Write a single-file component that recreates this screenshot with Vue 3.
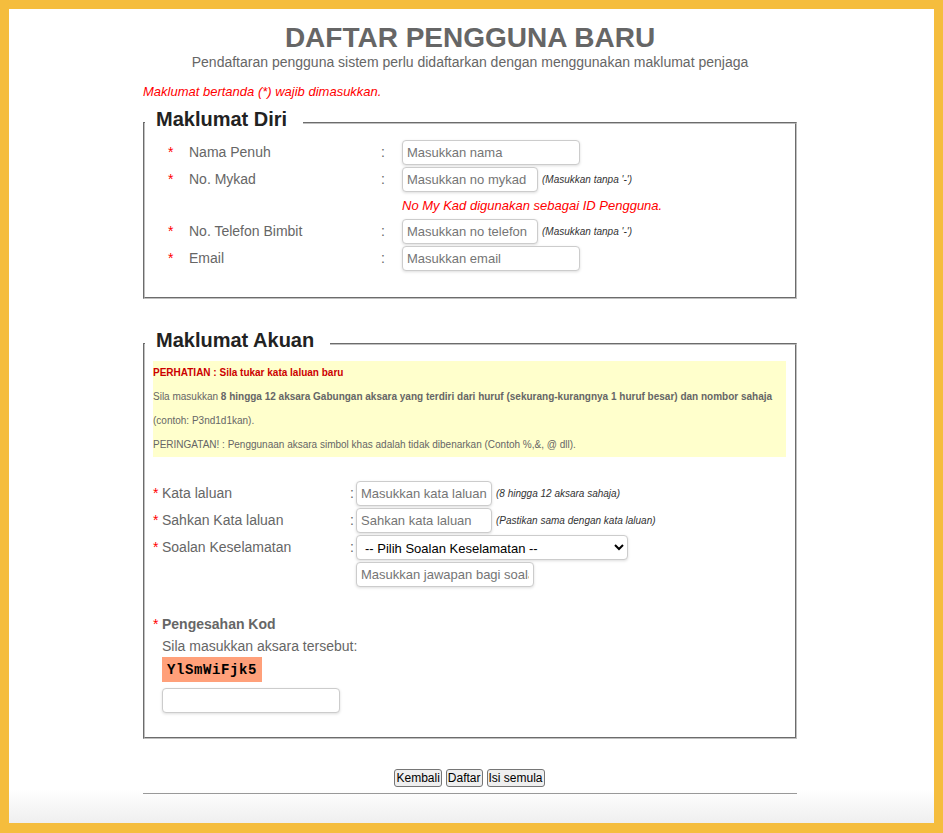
<template>
  <div class="page">
    <div class="content">
      <h1 class="title">DAFTAR PENGGUNA BARU</h1>
      <p class="subtitle">Pendaftaran pengguna sistem perlu didaftarkan dengan menggunakan maklumat penjaga</p>
      <p class="required-note">Maklumat bertanda (*) wajib dimasukkan.</p>

      <fieldset class="box box--diri">
        <legend class="box__legend">Maklumat Diri</legend>
        <div class="rows">
          <div class="row">
            <span class="star">*</span>
            <label class="label">Nama Penuh</label>
            <span class="colon">:</span>
            <input class="input input--long" placeholder="Masukkan nama" />
          </div>
          <div class="row">
            <span class="star">*</span>
            <label class="label">No. Mykad</label>
            <span class="colon">:</span>
            <input class="input input--short" placeholder="Masukkan no mykad" />
            <small class="hint">(Masukkan tanpa '-')</small>
          </div>
          <div class="row row--note">No My Kad digunakan sebagai ID Pengguna.</div>
          <div class="row">
            <span class="star">*</span>
            <label class="label">No. Telefon Bimbit</label>
            <span class="colon">:</span>
            <input class="input input--short" placeholder="Masukkan no telefon" />
            <small class="hint">(Masukkan tanpa '-')</small>
          </div>
          <div class="row">
            <span class="star">*</span>
            <label class="label">Email</label>
            <span class="colon">:</span>
            <input class="input input--long" placeholder="Masukkan email" />
          </div>
        </div>
      </fieldset>

      <fieldset class="box box--akaun">
        <legend class="box__legend">Maklumat Akuan</legend>
        <div class="notice">
          <p class="notice__head">PERHATIAN : Sila tukar kata laluan baru</p>
          <p>Sila masukkan <b>8 hingga 12 aksara Gabungan aksara yang terdiri dari huruf (sekurang-kurangnya 1 huruf besar) dan nombor sahaja</b></p>
          <p>(contoh: P3nd1d1kan).</p>
          <p>PERINGATAN! : Penggunaan aksara simbol khas adalah tidak dibenarkan (Contoh %,&amp;, @ dll).</p>
        </div>

        <div class="rows rows--akaun">
          <div class="row">
            <span class="star">*</span>
            <label class="label">Kata laluan</label>
            <span class="colon">:</span>
            <input class="input input--short" placeholder="Masukkan kata laluan" />
            <small class="hint">(8 hingga 12 aksara sahaja)</small>
          </div>
          <div class="row">
            <span class="star">*</span>
            <label class="label">Sahkan Kata laluan</label>
            <span class="colon">:</span>
            <input class="input input--short" placeholder="Sahkan kata laluan" />
            <small class="hint">(Pastikan sama dengan kata laluan)</small>
          </div>
          <div class="row">
            <span class="star">*</span>
            <label class="label">Soalan Keselamatan</label>
            <span class="colon">:</span>
            <select class="input input--select">
              <option>-- Pilih Soalan Keselamatan --</option>
            </select>
          </div>
          <div class="row">
            <span class="star"></span>
            <span class="label"></span>
            <span class="colon"></span>
            <input class="input input--long" placeholder="Masukkan jawapan bagi soalan keselamatan" />
          </div>
        </div>

        <div class="captcha">
          <div class="captcha__title"><span class="star">*</span><b>Pengesahan Kod</b></div>
          <div class="captcha__body">
            <div class="captcha__prompt">Sila masukkan aksara tersebut:</div>
            <div class="captcha__code">YlSmWiFjk5</div>
            <input class="input input--long" />
          </div>
        </div>
      </fieldset>

      <div class="actions">
        <button type="button">Kembali</button>
        <button type="button">Daftar</button>
        <button type="button">Isi semula</button>
      </div>
      <hr class="rule" />
    </div>
  </div>
</template>

<script setup>
</script>

<style>
html, body { margin: 0; }
</style>

<style scoped>
.page {
  box-sizing: border-box;
  height: 833px;
  overflow: hidden;
  border: 9px solid #f5bd3d;
  border-bottom-width: 10px;
  padding-top: 12px;
  background: linear-gradient(to bottom, #fff 0, #fff 780px, #efefef 814px);
  font-family: "Liberation Sans", Arial, sans-serif;
  font-size: 14px;
  color: #666;
}

.content { width: 654px; margin-left: 134px; }

.title {
  margin: 0;
  font-size: 28px;
  line-height: 33px;
  font-weight: 700;
  text-align: center;
  color: #666;
}
.subtitle { margin: 0; line-height: 16px; text-align: center; }
.required-note {
  margin: 14px 0 9px;
  font-size: 13px;
  line-height: 16px;
  font-style: italic;
  color: #f00;
}

.box {
  margin: 0;
  padding: 0;
  min-width: 0;
  border: 2px groove #c0c0c0;
}
.box--diri { padding-bottom: 26px; }
.box--akaun { margin-top: 31px; padding-bottom: 24px; }

.box__legend {
  padding: 0 16px 8px 11px;
  font-size: 20px;
  line-height: 20px;
  font-weight: 700;
  color: #222;
}

.rows { display: flex; flex-direction: column; gap: 2px; padding: 3px 0 0 23px; }
.rows--akaun { margin-top: 24px; padding: 0 0 0 8px; }

.row { display: flex; align-items: center; min-height: 25px; }
.row--note {
  min-height: 23px;
  padding-left: 234px;
  font-size: 13px;
  font-style: italic;
  color: #f00;
}

.star { width: 21px; flex: none; padding-bottom: 2px; color: #f00; }
.label { width: 192px; flex: none; padding-bottom: 2px; }
.colon { width: 21px; flex: none; padding-bottom: 2px; }

.rows--akaun .star { width: 9px; }
.rows--akaun .label { width: 188px; }
.rows--akaun .colon { width: 6px; }

.input {
  box-sizing: border-box;
  flex: none;
  height: 25px;
  padding: 4px;
  border: 1px solid #ccc;
  border-radius: 4px;
  box-shadow: 0 1px 3px #ddd;
  background: #fff;
  font-family: inherit;
  font-size: 13px;
  color: #000;
}
.input--long { width: 178px; }
.input--short { width: 136px; }
.input--select { width: 272px; }

.hint {
  margin-left: 4px;
  font-size: 10px;
  font-style: italic;
  color: #333;
}

.notice {
  margin: 3px 9px 0 8px;
  background: #ffc;
  font-size: 10px;
  line-height: 24px;
}
.notice p { margin: 0; }
.notice b { font-weight: 700; }
.notice__head { font-weight: 700; color: #c00; }

.captcha { margin: 29px 0 0 8px; }
.captcha__title { line-height: 16px; }
.captcha__title .star { display: inline-block; width: 9px; padding-bottom: 0; }
.captcha__body {
  display: flex;
  flex-direction: column;
  align-items: flex-start;
  padding: 6px 0 0 9px;
}
.captcha__prompt { line-height: 16px; }
.captcha__code {
  box-sizing: border-box;
  width: 100px;
  height: 25px;
  margin: 3px 0 6px;
  background: #ffa07a;
  font-family: "Liberation Mono", monospace;
  font-size: 14px;
  font-weight: 700;
  letter-spacing: 0.6px;
  line-height: 26px;
  text-align: center;
  color: #000;
}

.actions {
  display: flex;
  justify-content: center;
  gap: 4px;
  margin-top: 30px;
  padding-right: 1px;
}
.actions button {
  height: 18px;
  padding: 0 1px;
  border: 1px solid #767676;
  border-radius: 3px;
  background: #efefef;
  font-family: inherit;
  font-size: 12px;
  line-height: 14px;
  color: #000;
}

.rule { margin: 6px 0 0; border: 0; border-top: 1px solid #999; }
</style>
